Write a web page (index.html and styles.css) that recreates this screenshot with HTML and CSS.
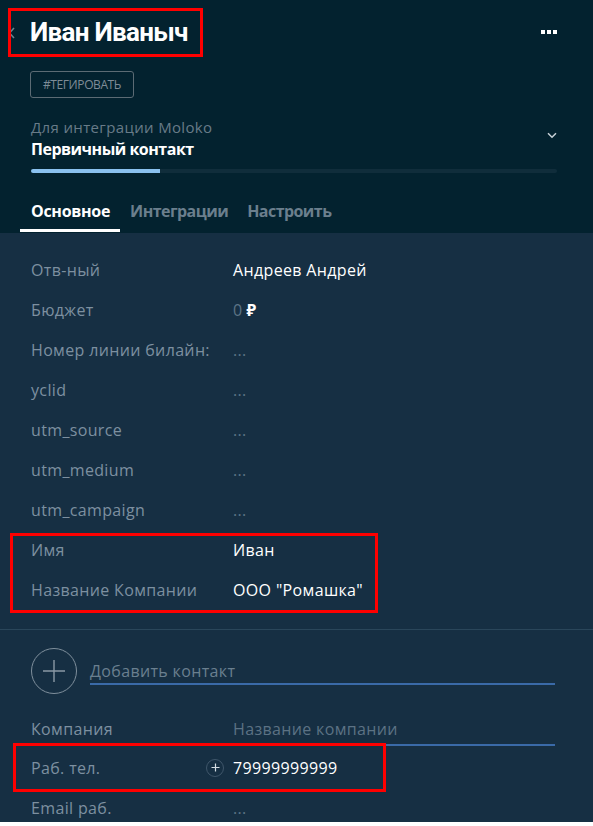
FILE: index.html
```html
<!DOCTYPE html>
<html lang="ru">
<head>
<meta charset="utf-8">
<link rel="stylesheet" href="styles.css">
</head>
<body>
<div class="card">
  <header class="head">
    <div class="title-row">
      <svg class="back" width="8" height="12" viewBox="0 0 8 12"><path d="M6 1 L1.5 6 L6 11" fill="none" stroke="#6f808b" stroke-width="1.6"/></svg>
      <h1 class="title">Иван Иваныч</h1>
      <span class="more"><i></i><i></i><i></i></span>
    </div>
    <div class="tag-row"><span class="tag">#ТЕГИРОВАТЬ</span></div>
    <div class="pipeline">
      <div>
        <div class="pipe-name">Для интеграции Moloko</div>
        <div class="pipe-status">Первичный контакт</div>
      </div>
      <svg class="chev" width="10" height="7" viewBox="0 0 10 7"><path d="M1 1.2 L5 5.2 L9 1.2" fill="none" stroke="#c9d2d8" stroke-width="1.5"/></svg>
    </div>
    <div class="progress"><div class="fill" style="width:129px"></div></div>
    <nav class="tabs">
      <span class="tab active">Основное</span>
      <span class="tab">Интеграции</span>
      <span class="tab">Настроить</span>
    </nav>
  </header>
  <main class="body">
    <div class="fields">
      <div class="row"><span class="label">Отв-ный</span><span class="value">Андреев Андрей</span></div>
      <div class="row"><span class="label">Бюджет</span><span class="value"><span class="muted">0</span> <b class="rub">₽</b></span></div>
      <div class="row"><span class="label">Номер линии билайн:</span><span class="value muted">...</span></div>
      <div class="row"><span class="label">yclid</span><span class="value muted">...</span></div>
      <div class="row"><span class="label">utm_source</span><span class="value muted">...</span></div>
      <div class="row"><span class="label">utm_medium</span><span class="value muted">...</span></div>
      <div class="row"><span class="label">utm_campaign</span><span class="value muted">...</span></div>
      <div class="row"><span class="label">Имя</span><span class="value">Иван</span></div>
      <div class="row"><span class="label">Название Компании</span><span class="value">ООО "Ромашка"</span></div>
    </div>
    <div class="contact">
      <div class="add-row">
        <span class="add-circle"><svg width="24" height="24" viewBox="0 0 24 24"><path d="M12 1V23M1 12H23" stroke="#8b99a5" stroke-width="1.4"/></svg></span>
        <span class="add-text">Добавить контакт</span>
      </div>
      <div class="row company"><span class="label">Компания</span><span class="value placeholder">Название компании</span></div>
      <div class="row phone"><span class="label">Раб. тел.</span><span class="value"><span class="mini-plus"><svg width="9" height="9" viewBox="0 0 9 9"><path d="M4.5 0.5V8.5M0.5 4.5H8.5" stroke="#d5dde3" stroke-width="1.2"/></svg></span>79999999999</span></div>
      <div class="row email"><span class="label">Email раб.</span><span class="value muted">...</span></div>
    </div>
  </main>
  <div class="mark mark-title"></div>
  <div class="mark mark-name"></div>
  <div class="mark mark-phone"></div>
</div>
</body>
</html>
```
FILE: styles.css
```css
* { box-sizing: border-box; }
html, body { margin: 0; padding: 0; background: #ffffff; }
body { font-family: "Open Sans", "Noto Sans", sans-serif; }

.card {
  position: relative;
  width: 593px;
  height: 822px;
  display: flex;
  flex-direction: column;
  overflow: hidden;
}

.head {
  flex: none;
  background: #03222f;
  height: 233px;
  padding: 0 36px 0 0;
  display: flex;
  flex-direction: column;
}

.title-row {
  height: 64px;
  display: flex;
  align-items: center;
  padding-left: 8px;
}
.back { margin-right: 14px; margin-top: 1px; }
.title {
  margin: 0;
  font-family: Roboto, sans-serif;
  font-size: 26px;
  font-weight: 700;
  color: #ffffff;
  letter-spacing: -0.7px;
  flex: 1;
}
.more { display: flex; gap: 2px; }
.more i { width: 4px; height: 4px; background: #ffffff; display: block; }

.tag-row { padding-left: 30px; margin-top: 7px; }
.tag {
  display: inline-flex;
  align-items: center;
  justify-content: center;
  width: 104px;
  height: 27px;
  border: 1px solid #5c6b74;
  border-radius: 3px;
  color: #7f8c97;
  font-size: 12px;
  letter-spacing: -0.4px;
}

.pipeline {
  margin-top: 19px;
  padding-left: 31px;
  display: flex;
  align-items: center;
  justify-content: space-between;
}
.pipe-name { color: #687b88; font-size: 15px; line-height: 20px; letter-spacing: 0.35px; }
.pipe-status { color: #ffffff; font-size: 16px; font-weight: 700; line-height: 24px; letter-spacing: -0.5px; }
.chev { margin-top: -8px; }

.progress {
  margin: 8px 0 0 31px;
  height: 4px;
  background: #102d3b;
  border-radius: 2px;
  overflow: hidden;
}
.fill { height: 100%; background: #8ac1ef; }

.tabs {
  margin-top: auto;
  margin-bottom: 1px;
  padding-left: 20px;
  display: flex;
}
.tab {
  color: #6b7f8d;
  font-size: 16px;
  font-weight: 700;
  line-height: 22px;
  padding: 0 10px 7px;
  letter-spacing: -0.3px;
  border-bottom: 3px solid transparent;
}
.tab + .tab { letter-spacing: -0.55px; padding-right: 9px; }
.tab.active { color: #ffffff; padding-left: 11px; border-bottom-color: #ffffff; }

.body {
  flex: 1;
  background: #162f43;
}

.fields { padding: 17px 0 19px; border-bottom: 1px solid #2a465a; }
.row {
  display: grid;
  grid-template-columns: 202px 1fr;
  height: 40px;
  align-items: center;
  padding-left: 31px;
  font-size: 16px;
}
.label { color: #7d90a0; letter-spacing: 0.35px; }
.value { color: #ffffff; letter-spacing: 0.35px; display: flex; align-items: center; gap: 4px; }
.muted { color: #5d7486; }
.rub { color: #ffffff; font-weight: 700; }

.contact { padding-top: 18px; }
.add-row {
  display: flex;
  align-items: center;
  padding-left: 31px;
  padding-right: 38px;
  height: 46px;
}
.add-circle {
  width: 46px;
  height: 46px;
  border: 1.5px solid #7f8f9c;
  border-radius: 50%;
  display: flex;
  align-items: center;
  justify-content: center;
  flex: none;
}
.add-text {
  margin-left: 13px;
  flex: 1;
  color: #6a7f8f;
  font-size: 16px;
  line-height: 22px;
  padding-top: 3px;
  padding-bottom: 1px;
  border-bottom: 2px solid #3a6aa8;
  letter-spacing: 0.35px;
}

.row.company { margin-top: 16px; height: 38px; padding-right: 38px; }
.placeholder { color: #5c7284; border-bottom: 2px solid #3a6aa8; height: 36px; align-self: start; padding-top: 3px; }
.row.phone { height: 39px; }
.row.phone .value { position: relative; }
.mini-plus {
  position: absolute;
  left: -27px;
  top: 50%;
  margin-top: -9px;
  width: 18px;
  height: 18px;
  border-radius: 50%;
  border: 1px solid #3f566a;
  display: flex;
  align-items: center;
  justify-content: center;
}
.row.email { height: 42px; }

.mark {
  position: absolute;
  border: 3px solid #ff0000;
  pointer-events: none;
}
.mark-title { left: 8px; top: 8px; width: 195px; height: 49px; }
.mark-name { left: 10px; top: 533px; width: 368px; height: 80px; }
.mark-phone { left: 13px; top: 743px; width: 373px; height: 49px; }
```
